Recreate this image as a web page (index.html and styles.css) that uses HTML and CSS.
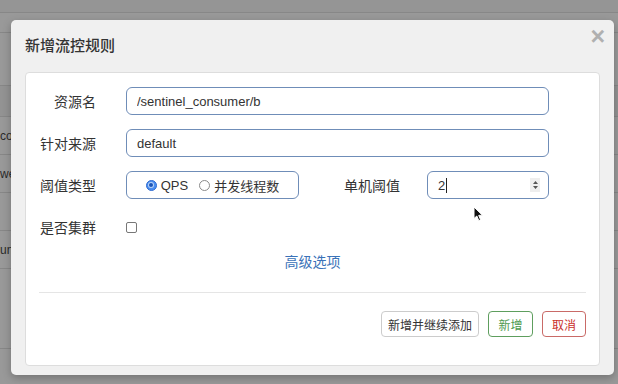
FILE: index.html
```html
<!DOCTYPE html>
<html lang="zh-CN">
<head>
    <meta charset="UTF-8">
    <title>新增流控规则</title>
    <link rel="stylesheet" href="styles.css">
</head>
<body>
<!-- 背景表格 (被遮罩) -->
<div class="bg-table">
    <div class="bg-row bg-top"></div>
    <div class="bg-row bg-head"></div>
    <div class="bg-row bg-tall"></div>
    <div class="bg-row bg-dark"></div>
    <div class="bg-row bg-std"><span>co</span></div>
    <div class="bg-row bg-std"><span>we</span></div>
    <div class="bg-row bg-std"></div>
    <div class="bg-row bg-std"><span>un</span></div>
    <div class="bg-row bg-big"></div>
</div>

<!-- 弹窗 -->
<div class="modal">
    <div class="modal-header">
        <h3 class="modal-title">新增流控规则</h3>
        <span class="close">&times;</span>
    </div>

    <div class="modal-panel">
        <div class="form-row">
            <label class="form-label">资源名</label>
            <input class="form-input wide" type="text" value="/sentinel_consumer/b">
        </div>
        <div class="form-row">
            <label class="form-label">针对来源</label>
            <input class="form-input wide" type="text" value="default">
        </div>
        <div class="form-row">
            <label class="form-label">阈值类型</label>
            <div class="radio-box">
                <span class="radio checked"></span><span class="radio-text">QPS</span>
                <span class="radio"></span><span class="radio-text">并发线程数</span>
            </div>
            <label class="form-label side">单机阈值</label>
            <div class="number-box">
                <span class="number-value">2</span><span class="caret"></span>
                <span class="spinner">
                    <svg width="7" height="10" viewBox="0 0 7 10"><path d="M3.5 1 L6 4 H1 Z M3.5 9 L6 6 H1 Z" fill="#555"/></svg>
                </span>
            </div>
        </div>
        <div class="form-row">
            <label class="form-label">是否集群</label>
            <span class="checkbox"></span>
        </div>

        <div class="advanced"><a href="#">高级选项</a></div>

        <div class="divider"></div>

        <div class="actions">
            <button class="btn btn-default">新增并继续添加</button>
            <button class="btn btn-green">新增</button>
            <button class="btn btn-red">取消</button>
        </div>
    </div>
</div>

<!-- 鼠标指针 -->
<svg class="pointer" width="11" height="16" viewBox="0 0 11 16">
    <path d="M1 1 L1 12.5 L3.8 10 L5.8 14.6 L7.6 13.8 L5.7 9.4 L9.4 9.2 Z" fill="#111" stroke="#fff" stroke-width="1"/>
</svg>
</body>
</html>
```

FILE: styles.css
```css
body {
    margin: 0;
    width: 618px;
    height: 384px;
    overflow: hidden;
    background-color: #999;
    font-family: "Liberation Sans", "Noto Sans CJK SC", sans-serif;
    position: relative;
}

/* 背景 */
.bg-table {
    display: flex;
    flex-direction: column;
}
.bg-row {
    border-bottom: 1px solid #878787;
    font-size: 12px;
    color: #2a2a2a;
    display: flex;
    align-items: center;
}
.bg-top { height: 12px; background-color: #959595; }
.bg-head { height: 19px; }
.bg-tall { height: 52px; }
.bg-dark { height: 30px; background-color: #939393; }
.bg-std { height: 37px; }
.bg-big { height: 79px; }

/* 弹窗 */
.modal {
    position: absolute;
    left: 11px;
    top: 20px;
    width: 603px;
    height: 355px;
    background-color: #f0f0f0;
    border-radius: 5px;
    box-shadow: 0 3px 9px rgba(0, 0, 0, 0.25);
    display: flex;
    flex-direction: column;
}
.modal-header {
    height: 50px;
    padding: 0 9px 0 14px;
    display: flex;
    justify-content: space-between;
    align-items: center;
}
.modal-title {
    margin: 0 0 2px 0;
    font-size: 15px;
    font-weight: 500;
    color: #333;
    font-family: "Noto Sans CJK SC", sans-serif;
}
.close {
    align-self: flex-start;
    margin-top: 4px;
    font-size: 25px;
    line-height: 24px;
    font-weight: bold;
    color: #b0b0b0;
}
.modal-panel {
    margin: 2px 14px 0 14px;
    height: 278px;
    background-color: #fff;
    border: 1px solid #ddd;
    border-radius: 4px;
    padding: 14px 13px 0 13px;
}

.form-row {
    display: flex;
    align-items: center;
    height: 28px;
    margin-bottom: 14px;
}
.form-label {
    width: 57px;
    text-align: right;
    font-size: 14px;
    font-weight: 400;
    color: #333;
    font-family: "Noto Sans CJK SC", sans-serif;
    margin-right: 30px;
    flex-shrink: 0;
}
.form-label.side {
    width: 56px;
    margin-left: 45px;
    margin-right: 27px;
}
.form-input {
    box-sizing: border-box;
    height: 28px;
    border: 1px solid #6f8db8;
    border-radius: 6px;
    padding: 0 10px;
    font-size: 13px;
    color: #333;
    font-family: "Liberation Sans", sans-serif;
    outline: none;
}
.form-input.wide {
    width: 423px;
}

.radio-box {
    box-sizing: border-box;
    width: 173px;
    height: 28px;
    border: 1px solid #6f8db8;
    border-radius: 6px;
    display: flex;
    align-items: center;
    justify-content: center;
    font-size: 13px;
    color: #333;
}
.radio {
    box-sizing: border-box;
    width: 11px;
    height: 11px;
    border-radius: 50%;
    border: 1px solid #8a8a8a;
    background-color: #fff;
    margin-right: 4px;
    display: flex;
    align-items: center;
    justify-content: center;
}
.radio.checked {
    border-color: #2f6bd0;
    background-color: #4b8ef0;
}
.radio.checked::after {
    content: "";
    width: 4px;
    height: 4px;
    border-radius: 50%;
    background-color: #1d56b8;
    box-shadow: 0 0 0 1px #b9d3f7;
}
.radio-text {
    margin-right: 11px;
    font-family: "Liberation Sans", "Noto Sans CJK SC", sans-serif;
}
.radio-text:last-child {
    margin-right: 0;
}

.number-box {
    box-sizing: border-box;
    width: 122px;
    height: 28px;
    border: 1px solid #6f8db8;
    border-radius: 6px;
    padding: 0 8px 0 10px;
    display: flex;
    align-items: center;
    font-size: 13px;
    color: #333;
}
.caret {
    width: 1px;
    height: 15px;
    background-color: #222;
    margin-left: 1px;
}
.spinner {
    margin-left: auto;
    width: 10px;
    height: 14px;
    background-color: #eee;
    display: flex;
    align-items: center;
    justify-content: center;
}

.checkbox {
    box-sizing: border-box;
    width: 11px;
    height: 11px;
    border: 1px solid #777;
    border-radius: 2px;
    background-color: #fff;
}

.advanced {
    text-align: center;
    margin-top: -4px;
    height: 20px;
    line-height: 20px;
}
.advanced a {
    font-size: 14px;
    color: #3a72b8;
    text-decoration: none;
    font-family: "Noto Sans CJK SC", sans-serif;
}

.divider {
    margin-top: 21px;
    border-top: 1px solid #e5e5e5;
}

.actions {
    margin-top: 18px;
    display: flex;
    justify-content: flex-end;
    gap: 9px;
}
.btn {
    box-sizing: border-box;
    height: 26px;
    padding: 0;
    background-color: #fff;
    border: 1px solid #ccc;
    border-radius: 4px;
    font-size: 12px;
    white-space: nowrap;
    font-family: "Noto Sans CJK SC", sans-serif;
    color: #333;
}
.btn-default {
    width: 98px;
}
.btn-green {
    width: 45px;
    color: #4f9a4f;
    border-color: #5e9e5e;
}
.btn-red {
    width: 44px;
    color: #c9302c;
    border-color: #c96a67;
}

.pointer {
    position: absolute;
    left: 473px;
    top: 206px;
}
```
